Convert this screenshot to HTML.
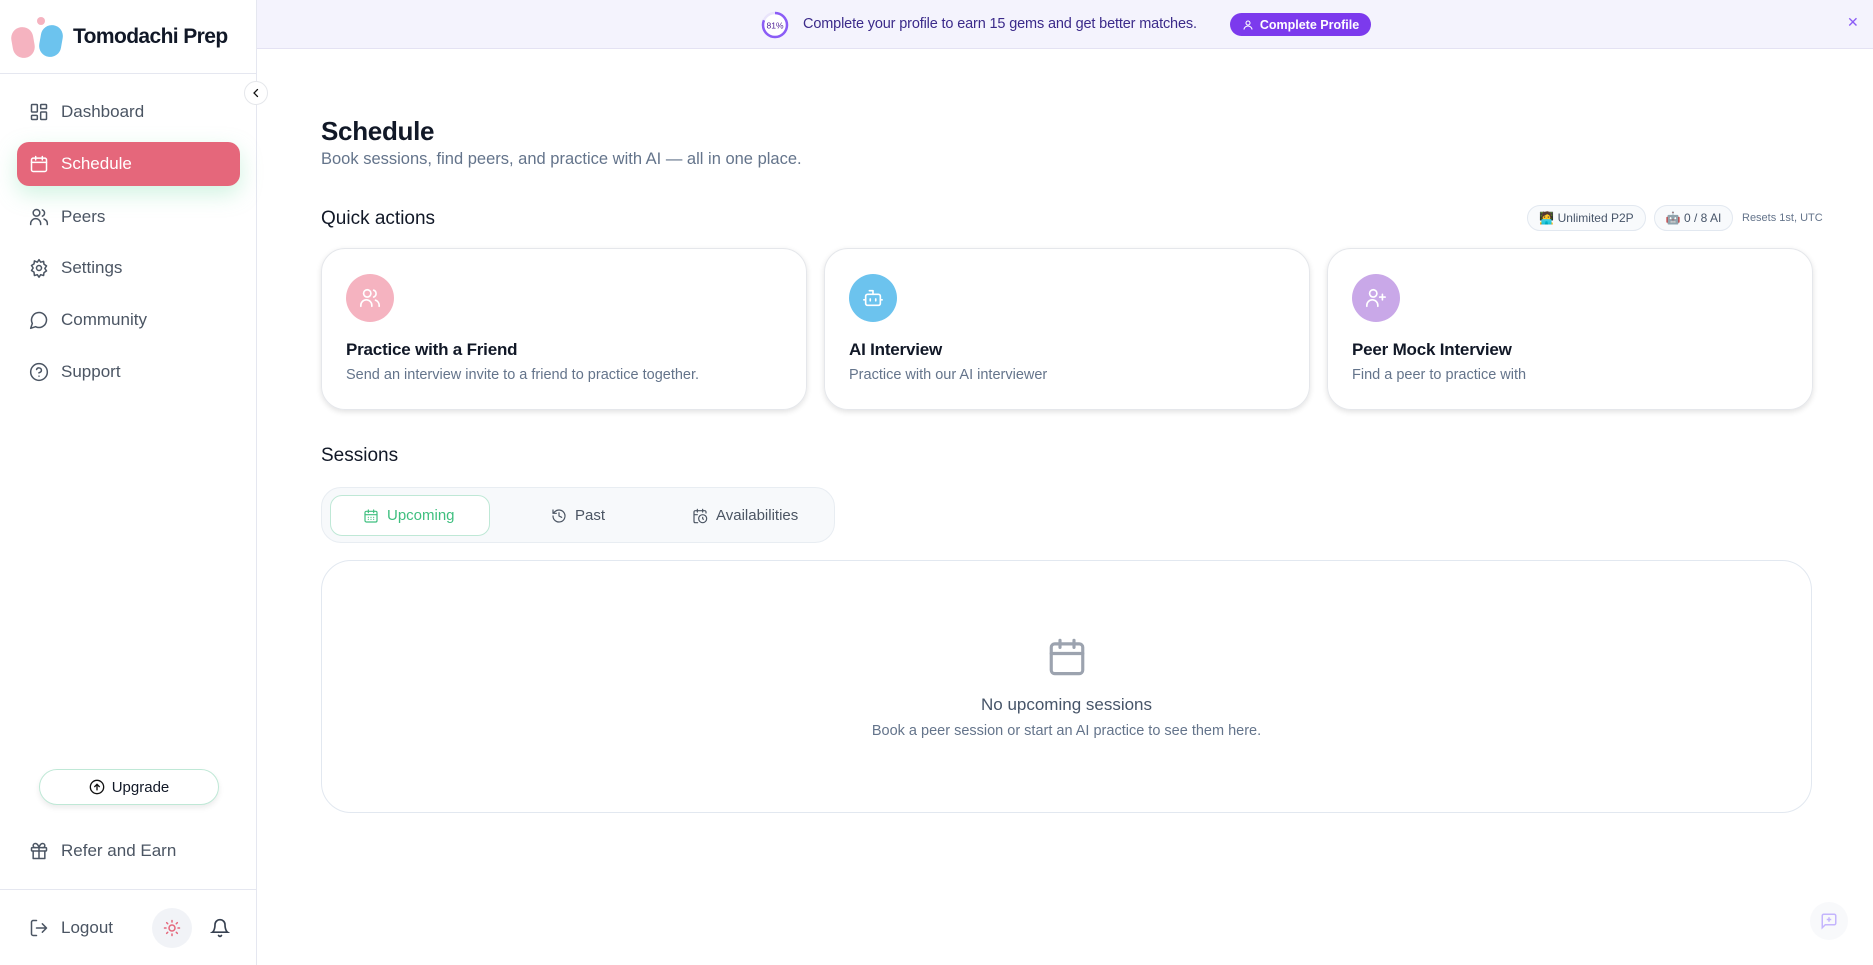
<!DOCTYPE html>
<html><head><meta charset="utf-8"><style>
*{box-sizing:border-box;margin:0;padding:0}
body{width:1873px;height:965px;overflow:hidden;background:#fff;font-family:"Liberation Sans",sans-serif;color:#0f172a;position:relative}
.abs{position:absolute}
.side{left:0;top:0;width:257px;height:965px;border-right:1px solid #e5e7f0;background:#fff}
.nav{position:absolute;left:17px;width:223px;height:44px;display:flex;align-items:center;padding-left:12px;font-size:17px;color:#4b5563;border-radius:12px;white-space:nowrap}
.nav svg{width:20px;height:20px;margin-right:12px;fill:none;stroke:#4b5563;stroke-width:1.8;stroke-linecap:round;stroke-linejoin:round}
.nav.act{background:#e5677b;color:#fff;box-shadow:0 8px 22px rgba(120,220,170,.35)}
.nav.act svg{stroke:#fff}
.card{position:absolute;top:248px;width:486px;height:162px;border:1px solid #e5e7eb;border-radius:24px;box-shadow:0 2px 6px rgba(0,0,0,.12)}
.card .ic{position:absolute;left:24px;top:25px;width:48px;height:48px;border-radius:50%;display:flex;align-items:center;justify-content:center}
.card .ic svg{width:22px;height:22px;fill:none;stroke:#fff;stroke-width:1.8;stroke-linecap:round;stroke-linejoin:round}
.card h3{position:absolute;left:24px;top:91px;font-size:17px;font-weight:700;color:#111827;letter-spacing:-.2px}
.card p{position:absolute;left:24px;top:118px;font-size:14.5px;color:#64748b}
.badge{position:absolute;top:205px;height:26px;border:1px solid #e2e8f0;border-radius:13px;background:#f8fafc;font-size:12px;color:#475569;display:flex;align-items:center;justify-content:center;gap:4px;white-space:nowrap}
.tab{position:absolute;top:496px;height:39px;display:flex;align-items:center;gap:8px;font-size:15px;color:#4b5563}
.tab svg{width:16px;height:16px;fill:none;stroke:#4b5563;stroke-width:1.8;stroke-linecap:round;stroke-linejoin:round}
</style></head><body>
<!-- banner -->
<div class="abs" style="left:257px;top:0;width:1616px;height:49px;background:#f4f3fd;border-bottom:1px solid #e4e2f3"></div>
<svg class="abs" style="left:761px;top:11px" width="28" height="28" viewBox="0 0 28 28"><circle cx="14" cy="14" r="12" fill="#fff" stroke="#e9e4fb" stroke-width="2.5"/><circle cx="14" cy="14" r="12" fill="none" stroke="#8b5cf6" stroke-width="2.5" stroke-dasharray="61 75.4" transform="rotate(-90 14 14)"/><text x="14" y="17.5" font-size="8.5" text-anchor="middle" fill="#4c1d95" font-family="Liberation Sans">81%</text></svg>
<div class="abs" style="left:803px;top:16px;font-size:14.5px;color:#3b2a8a;letter-spacing:-.15px">Complete your profile to earn 15 gems and get better matches.</div>
<div class="abs" style="left:1230px;top:13px;width:141px;height:23px;border-radius:12px;background:#7c3aed;color:#fff;font-size:12.5px;font-weight:700;display:flex;align-items:center;justify-content:center;gap:6px"><svg width="12" height="12" viewBox="0 0 24 24" fill="none" stroke="#fff" stroke-width="2.2"><circle cx="12" cy="8" r="4"/><path d="M4 21c0-4 4-7 8-7s8 3 8 7"/></svg>Complete Profile</div>
<div class="abs" style="left:1847px;top:14px;font-size:14px;color:#8b5cf6">✕</div>

<!-- sidebar -->
<div class="abs side"></div>
<div class="abs" style="left:0;top:73px;width:256px;height:1px;background:#e5e7f0"></div>
<div class="abs" style="left:12px;top:27px;width:22px;height:31px;border-radius:11px;background:#f5b3c0;transform:rotate(-10deg)"></div>
<div class="abs" style="left:40px;top:25px;width:22px;height:32px;border-radius:11px;background:#6cc3ee;transform:rotate(10deg)"></div>
<div class="abs" style="left:37px;top:17px;width:8px;height:8px;border-radius:50%;background:#f5b3c0"></div>
<div class="abs" style="left:73px;top:25px;font-size:21px;font-weight:700;color:#111827;letter-spacing:-.6px">Tomodachi Prep</div>
<div class="abs" style="left:244px;top:81px;width:24px;height:24px;border-radius:50%;background:#fff;border:1px solid #e5e7eb;display:flex;align-items:center;justify-content:center"><svg width="12" height="12" viewBox="0 0 24 24" fill="none" stroke="#111" stroke-width="2.5" stroke-linecap="round"><path d="M15 5l-7 7 7 7"/></svg></div>

<div class="nav" style="top:90px"><svg viewBox="0 0 24 24"><rect x="3" y="3" width="7" height="9" rx="1"/><rect x="14" y="3" width="7" height="5" rx="1"/><rect x="14" y="12" width="7" height="9" rx="1"/><rect x="3" y="16" width="7" height="5" rx="1"/></svg>Dashboard</div>
<div class="nav act" style="top:142px"><svg viewBox="0 0 24 24"><rect x="3" y="5" width="18" height="16" rx="2"/><path d="M8 3v4M16 3v4M3 10h18"/></svg>Schedule</div>
<div class="nav" style="top:195px"><svg viewBox="0 0 24 24"><circle cx="9" cy="7" r="4"/><path d="M2 21v-1a6 6 0 0 1 12 0v1M16 3.5a4 4 0 0 1 0 7.5M22 21v-1a6 6 0 0 0-4-5.6"/></svg>Peers</div>
<div class="nav" style="top:246px"><svg viewBox="0 0 24 24"><circle cx="12" cy="12" r="3"/><path d="M12 2l2 3 3.5-1 .5 3.5 3 2-2 3 2 3-3 2-.5 3.5-3.5-1-2 3-2-3-3.5 1L6 17l-3-2 2-3-2-3 3-2 .5-3.5L10 5z"/></svg>Settings</div>
<div class="nav" style="top:298px"><svg viewBox="0 0 24 24"><path d="M7.9 20A9 9 0 1 0 4 16.1L2 22z"/></svg>Community</div>
<div class="nav" style="top:350px"><svg viewBox="0 0 24 24"><circle cx="12" cy="12" r="10"/><path d="M9.1 9a3 3 0 0 1 5.8 1c0 2-3 3-3 3M12 17h.01"/></svg>Support</div>

<div class="abs" style="left:39px;top:769px;width:180px;height:36px;border:1.5px solid #bfe8d6;border-radius:18px;display:flex;align-items:center;justify-content:center;gap:7px;font-size:15px;color:#111827;box-shadow:0 3px 6px rgba(0,0,0,.08)"><svg width="16" height="16" viewBox="0 0 24 24" fill="none" stroke="#111" stroke-width="2"><circle cx="12" cy="12" r="10"/><path d="M12 17V8M8 12l4-4 4 4"/></svg>Upgrade</div>
<div class="nav" style="top:829px"><svg viewBox="0 0 24 24"><rect x="3" y="8" width="18" height="4" rx="1"/><path d="M12 8v13M19 12v9H5v-9M7.5 8a2.5 2.5 0 0 1 0-5C11 3 12 8 12 8s1-5 4.5-5a2.5 2.5 0 0 1 0 5"/></svg>Refer and Earn</div>
<div class="abs" style="left:0;top:889px;width:256px;height:1px;background:#e5e7f0"></div>
<div class="nav" style="top:906px"><svg viewBox="0 0 24 24"><path d="M9 21H5a2 2 0 0 1-2-2V5a2 2 0 0 1 2-2h4M16 17l5-5-5-5M21 12H9"/></svg>Logout</div>
<div class="abs" style="left:152px;top:908px;width:40px;height:40px;border-radius:50%;background:#f1f3f7;display:flex;align-items:center;justify-content:center"><svg width="18" height="18" viewBox="0 0 24 24" fill="none" stroke="#e5677b" stroke-width="2" stroke-linecap="round"><circle cx="12" cy="12" r="4"/><path d="M12 2v2M12 20v2M4.9 4.9l1.4 1.4M17.7 17.7l1.4 1.4M2 12h2M20 12h2M4.9 19.1l1.4-1.4M17.7 6.3l1.4-1.4"/></svg></div>
<svg class="abs" style="left:210px;top:918px" width="20" height="20" viewBox="0 0 24 24" fill="none" stroke="#374151" stroke-width="2" stroke-linecap="round"><path d="M6 8a6 6 0 0 1 12 0c0 7 3 9 3 9H3s3-2 3-9M10.3 21a1.9 1.9 0 0 0 3.4 0"/></svg>

<!-- main -->
<div class="abs" style="left:321px;top:116px;font-size:26px;font-weight:700;color:#111827;letter-spacing:-.3px">Schedule</div>
<div class="abs" style="left:321px;top:150px;font-size:16.5px;color:#64748b">Book sessions, find peers, and practice with AI — all in one place.</div>
<div class="abs" style="left:321px;top:208px;font-size:19px;color:#111827">Quick actions</div>
<div class="badge" style="left:1527px;width:119px">🧑‍💻 Unlimited P2P</div>
<div class="badge" style="left:1654px;width:79px">🤖 0 / 8 AI</div>
<div class="abs" style="left:1742px;top:212px;font-size:11px;color:#64748b;white-space:nowrap">Resets 1st, UTC</div>

<div class="card" style="left:321px"><div class="ic" style="background:#f5b3c0"><svg viewBox="0 0 24 24"><circle cx="9" cy="7" r="4"/><path d="M2 21v-1a6 6 0 0 1 12 0v1M16 3.5a4 4 0 0 1 0 7.5M22 21v-1a6 6 0 0 0-4-5.6"/></svg></div><h3>Practice with a Friend</h3><p>Send an interview invite to a friend to practice together.</p></div>
<div class="card" style="left:824px"><div class="ic" style="background:#6cc3ee"><svg viewBox="0 0 24 24"><path d="M12 8V4H8"/><rect x="4" y="8" width="16" height="12" rx="2"/><path d="M2 14h2M20 14h2M15 13v2M9 13v2"/></svg></div><h3>AI Interview</h3><p>Practice with our AI interviewer</p></div>
<div class="card" style="left:1327px"><div class="ic" style="background:#c9a8e8"><svg viewBox="0 0 24 24"><circle cx="9" cy="7" r="4"/><path d="M2 21v-1a6 6 0 0 1 12 0v1M19 8v6M16 11h6"/></svg></div><h3>Peer Mock Interview</h3><p>Find a peer to practice with</p></div>

<div class="abs" style="left:321px;top:445px;font-size:19px;color:#111827">Sessions</div>
<div class="abs" style="left:321px;top:487px;width:514px;height:56px;border:1px solid #e8edf2;border-radius:20px;background:#f7f9fb"></div>
<div class="abs" style="left:330px;top:495px;width:160px;height:41px;border:1px solid #bfe8d6;border-radius:12px;background:#fff"></div>
<div class="tab" style="left:363px;color:#3fbf7f"><svg viewBox="0 0 24 24" style="stroke:#3fbf7f"><rect x="3" y="5" width="18" height="16" rx="2"/><path d="M8 3v4M16 3v4M3 10h18M8 14h.01M12 14h.01M16 14h.01M8 17h.01M12 17h.01M16 17h.01"/></svg>Upcoming</div>
<div class="tab" style="left:551px"><svg viewBox="0 0 24 24"><path d="M3 12a9 9 0 1 0 3-6.7L3 8M3 3v5h5M12 7v5l4 2"/></svg>Past</div>
<div class="tab" style="left:692px"><svg viewBox="0 0 24 24"><path d="M21 7.5V6a2 2 0 0 0-2-2H5a2 2 0 0 0-2 2v14a2 2 0 0 0 2 2h3.5M16 2v4M8 2v4M3 10h5"/><circle cx="16" cy="16" r="6"/><path d="M16 14v2l1 1"/></svg>Availabilities</div>

<div class="abs" style="left:321px;top:560px;width:1491px;height:253px;border:1px solid #e2e8f0;border-radius:30px"></div>
<svg class="abs" style="left:1046px;top:635px" width="42" height="44" viewBox="0 0 24 24" fill="none" stroke="#9ca3af" stroke-width="1.8" stroke-linecap="round"><rect x="3" y="4.5" width="18" height="17" rx="2"/><path d="M8 2.5v4M16 2.5v4M3 10h18"/></svg>
<div class="abs" style="left:321px;top:695px;width:1491px;text-align:center;font-size:17px;color:#475569">No upcoming sessions</div>
<div class="abs" style="left:321px;top:723px;width:1491px;text-align:center;font-size:14.5px;color:#64748b">Book a peer session or start an AI practice to see them here.</div>

<div class="abs" style="left:1810px;top:902px;width:38px;height:38px;border-radius:50%;background:#f8f9fb;display:flex;align-items:center;justify-content:center"><svg width="18" height="18" viewBox="0 0 24 24" fill="none" stroke="#c4b5fd" stroke-width="2"><path d="M21 15a2 2 0 0 1-2 2H7l-4 4V5a2 2 0 0 1 2-2h14a2 2 0 0 1 2 2z"/><path d="M12 7v6M9 10h6"/></svg></div>
</body></html>
